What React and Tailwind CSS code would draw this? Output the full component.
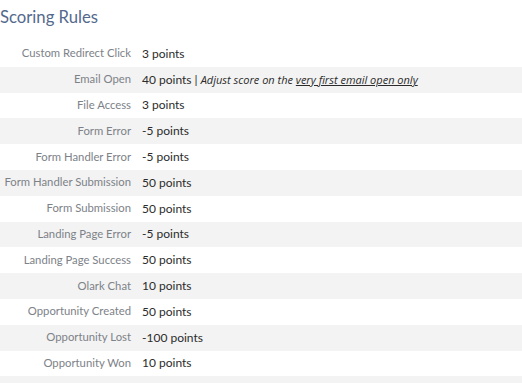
export default function App() {
  const rules = [
    ["Custom Redirect Click", "3 points"],
    ["Email Open", "40 points", true],
    ["File Access", "3 points"],
    ["Form Error", "-5 points"],
    ["Form Handler Error", "-5 points"],
    ["Form Handler Submission", "50 points"],
    ["Form Submission", "50 points"],
    ["Landing Page Error", "-5 points"],
    ["Landing Page Success", "50 points"],
    ["Olark Chat", "10 points"],
    ["Opportunity Created", "50 points"],
    ["Opportunity Lost", "-100 points"],
    ["Opportunity Won", "10 points"],
  ];
  return (
    <div className="w-[522px] h-[383px] overflow-hidden bg-white font-['Lato','Noto_Sans',sans-serif]">
      <h2 className="h-[41px] pt-[6px] text-[16.7px] leading-[22px] text-[#54698d] font-normal">
        Scoring Rules
      </h2>
      <div>
        {rules.map(([label, value, note], i) => (
          <div
            key={label}
            className={`flex items-center h-[25.8px] ${i % 2 === 1 ? "bg-[#f3f3f3]" : "bg-white"}`}
          >
            <div className="w-[131px] shrink-0 text-right text-[11.3px] text-[#7d8288] whitespace-nowrap">
              {label}
            </div>
            <div className="pl-[11px] text-[12px] text-[#2b2b2b] whitespace-nowrap">
              {value}
              {note && (
                <span>
                  {" | "}
                  <span className="italic font-['Open_Sans',sans-serif] text-[11px]">
                    Adjust score on the{" "}
                    <span className="underline">very first email open only</span>
                  </span>
                </span>
              )}
            </div>
          </div>
        ))}
        {/* next row, clipped by the panel edge */}
        <div className="h-[25.8px] bg-[#f3f3f3]" />
      </div>
    </div>
  );
}
